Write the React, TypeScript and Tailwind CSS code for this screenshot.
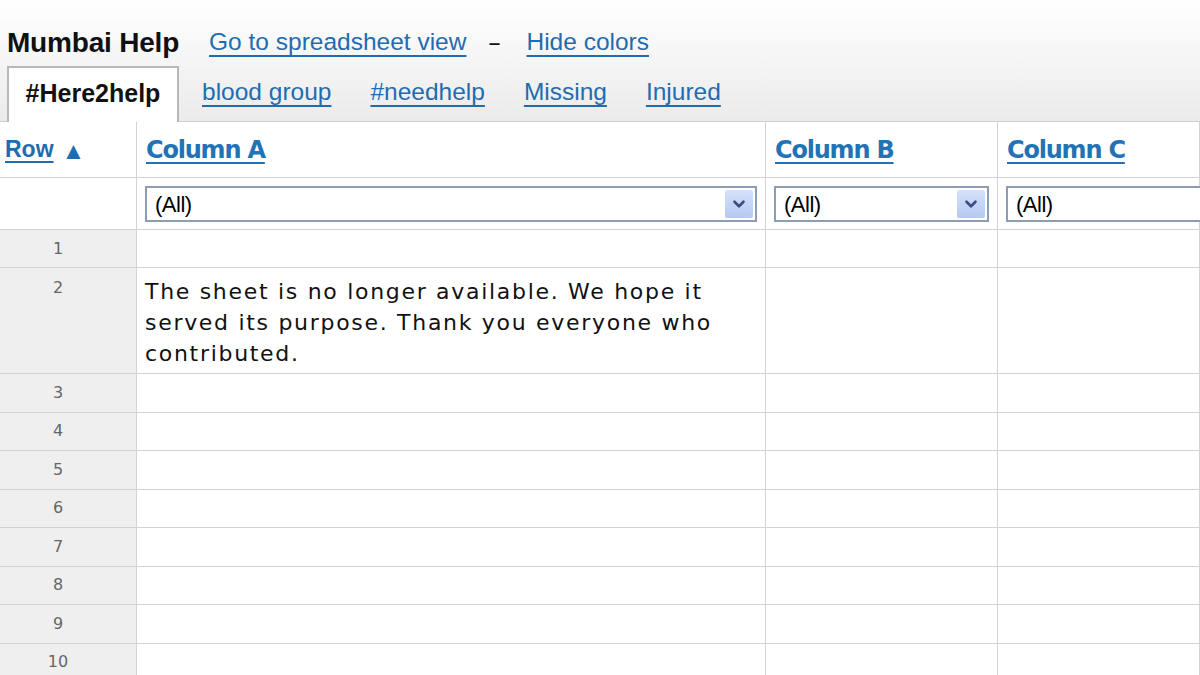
import { ChevronDown } from "lucide-react";

const linkCls =
  "text-[#1f6cb0] underline underline-offset-[5px] decoration-[1.5px] font-['Liberation_Sans',Arial,sans-serif]";

function Filter({ arrow }: { arrow: boolean }) {
  return (
    <div className="mx-[8px] mt-[8px] h-[36px] border-2 border-[#8e9db3] bg-white flex items-center justify-between pl-[8px] pr-[2px]">
      <span className="text-[22px] text-black font-['Liberation_Sans',Arial,sans-serif] tracking-[-0.5px]">
        (All)
      </span>
      {arrow && (
        <span className="w-[28px] h-[28px] rounded-[2px] bg-gradient-to-b from-[#d6e2fb] to-[#b4c8f2] flex items-center justify-center">
          <ChevronDown className="w-[18px] h-[18px] text-[#3c4d7d]" strokeWidth={3.5} />
        </span>
      )}
    </div>
  );
}

export default function App() {
  const rows = [3, 4, 5, 6, 7, 8, 9, 10];
  const cell = "border-r border-b border-[#d2d2d2]";
  const numCell =
    "border-r border-b border-[#d2d2d2] bg-[#efefef] text-center pr-[20px] text-[16px] text-[#666] font-['DejaVu_Sans',Verdana,sans-serif]";
  return (
    <div className="w-[1200px] h-[675px] overflow-hidden bg-white">
      <div className="h-[122px] bg-gradient-to-b from-white to-[#ebebeb] pl-[7px] pt-[22px] border-b border-[#cfcfcf]">
        <div className="flex items-baseline h-[38px]">
          <span className="text-[28px] font-bold text-[#111] font-['Liberation_Sans',Arial,sans-serif] tracking-[-0.2px]">
            Mumbai Help
          </span>
          <a className={`${linkCls} ml-[30px] text-[24.5px] relative -top-[2px]`}>Go to spreadsheet view</a>
          <span className="ml-[22px] text-[24px] text-[#111] relative -top-[2px]">–</span>
          <a className={`${linkCls} ml-[26px] text-[24.5px] relative -top-[2px]`}>Hide colors</a>
        </div>
        <div className="flex items-end mt-[6px]">
          <div className="w-[172px] h-[56px] bg-white border-2 border-b-0 border-[#b8b8b8] flex items-center justify-center pb-[2px] text-[25px] font-bold text-[#111] font-['Liberation_Sans',Arial,sans-serif] -mb-px">
            #Here2help
          </div>
          <div className="flex items-baseline gap-[39px] ml-[23px] pb-[10px] text-[24.5px]">
            <a className={linkCls}>blood group</a>
            <a className={linkCls}>#needhelp</a>
            <a className={linkCls}>Missing</a>
            <a className={linkCls}>Injured</a>
          </div>
        </div>
      </div>

      <div className="grid grid-cols-[137px_629px_232px_1fr]">
        <div className={`${cell} h-[56px] pl-[5px] flex items-center`}>
          <a className="text-[#1f6cb0] underline underline-offset-[4px] decoration-2 font-bold text-[23px] font-['Liberation_Sans',Arial,sans-serif]">
            Row
          </a>
          <span className="ml-[8px] text-[#1f6cb0] text-[24px] leading-none">▲</span>
        </div>
        {["Column A", "Column B", "Column C"].map((c) => (
          <div key={c} className={`${cell} h-[56px] pl-[9px] flex items-center`}>
            <a className="text-[#2273b5] underline underline-offset-[4px] decoration-2 font-bold text-[24px] font-['DejaVu_Sans',Verdana,sans-serif] tracking-[-1.2px]">
              {c}
            </a>
          </div>
        ))}

        <div className={`${cell} h-[52px]`} />
        <div className={`${cell} h-[52px]`}>
          <Filter arrow />
        </div>
        <div className={`${cell} h-[52px]`}>
          <Filter arrow />
        </div>
        <div className={`${cell} h-[52px]`}>
          <div className="-mr-[20px]">
            <Filter arrow={false} />
          </div>
        </div>

        <div className={`${numCell} h-[38px] flex items-center justify-center`}>1</div>
        <div className={`${cell} h-[38px]`} />
        <div className={`${cell} h-[38px]`} />
        <div className={`${cell} h-[38px]`} />

        <div className={`${numCell} h-[106px] pt-[8px]`}>2</div>
        <div
          className={`${cell} h-[106px] pl-[8px] pr-[30px] pt-[8px] text-[22px] leading-[31px] text-[#111] font-['DejaVu_Sans',Verdana,sans-serif] tracking-[1.7px]`}
        >
          The sheet is no longer available. We hope it served its purpose. Thank you everyone who
          contributed.
        </div>
        <div className={`${cell} h-[106px]`} />
        <div className={`${cell} h-[106px]`} />

        {rows.map((r) => (
          <div key={r} className="contents">
            <div className={`${numCell} h-[38.5px] flex items-center justify-center`}>{r}</div>
            <div className={`${cell} h-[38.5px]`} />
            <div className={`${cell} h-[38.5px]`} />
            <div className={`${cell} h-[38.5px]`} />
          </div>
        ))}
      </div>
    </div>
  );
}
